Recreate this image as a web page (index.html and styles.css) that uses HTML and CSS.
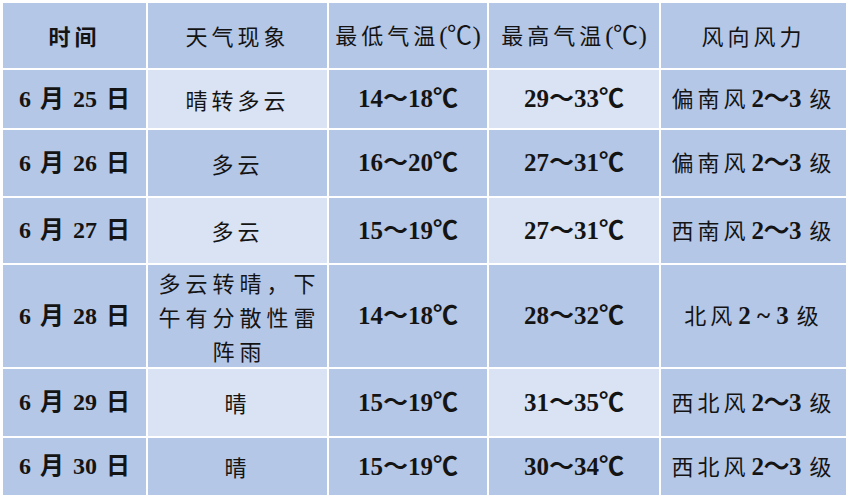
FILE: index.html
```html
<!DOCTYPE html>
<html lang="zh-CN">
<head>
<meta charset="utf-8">
<title>天气预报</title>
<link rel="stylesheet" href="styles.css">
</head>
<body>
<table class="wx">
  <colgroup>
    <col class="c0"><col class="c1"><col class="c2"><col class="c3"><col class="c4">
  </colgroup>
  <tr class="rh">
    <th class="hd">时间</th>
    <th class="kai">天气现象</th>
    <th class="kai">最低气温<span class="num-r">(℃)</span></th>
    <th class="kai">最高气温<span class="num-r">(℃)</span></th>
    <th class="kai">风向风力</th>
  </tr>
  <tr class="r1 band">
    <td class="date">6 月 25 日</td>
    <td class="kai">晴转多云</td>
    <td class="temp">14～18℃</td>
    <td class="temp">29～33℃</td>
    <td class="kai">偏南风<b class="n">2～3</b>级</td>
  </tr>
  <tr class="r2">
    <td class="date">6 月 26 日</td>
    <td class="kai">多云</td>
    <td class="temp">16～20℃</td>
    <td class="temp">27～31℃</td>
    <td class="kai">偏南风<b class="n">2～3</b>级</td>
  </tr>
  <tr class="r3 band">
    <td class="date">6 月 27 日</td>
    <td class="kai">多云</td>
    <td class="temp">15～19℃</td>
    <td class="temp">27～31℃</td>
    <td class="kai">西南风<b class="n">2～3</b>级</td>
  </tr>
  <tr class="r4">
    <td class="date">6 月 28 日</td>
    <td class="kai multi">多云转晴，下<br>午有分散性雷<br>阵雨</td>
    <td class="temp">14～18℃</td>
    <td class="temp">28～32℃</td>
    <td class="kai">北风<b class="n">2 ~ 3</b>级</td>
  </tr>
  <tr class="r5 band">
    <td class="date">6 月 29 日</td>
    <td class="kai">晴</td>
    <td class="temp">15～19℃</td>
    <td class="temp">31～35℃</td>
    <td class="kai">西北风<b class="n">2～3</b>级</td>
  </tr>
  <tr class="r6">
    <td class="date">6 月 30 日</td>
    <td class="kai">晴</td>
    <td class="temp">15～19℃</td>
    <td class="temp">30～34℃</td>
    <td class="kai">西北风<b class="n">2～3</b>级</td>
  </tr>
</table>
</body>
</html>
```
FILE: styles.css
```css
html, body {
  margin: 0;
  padding: 0;
  background: #ffffff;
}
body {
  width: 848px;
  height: 500px;
  overflow: hidden;
}
.wx {
  margin: 1px 0 0 1px;
  border-collapse: separate;
  border-spacing: 2px;
  table-layout: fixed;
  width: 846px;
  color: #141414;
  font-family: "Liberation Serif", "Noto Sans CJK SC", serif;
}
.c0 { width: 143px; }
.c1 { width: 179px; }
.c2 { width: 158px; }
.c3 { width: 170px; }
.c4 { width: 185px; }
.wx th, .wx td {
  background: #b4c7e7;
  padding: 0;
  text-align: center;
  vertical-align: middle;
  font-size: 22px;
  line-height: 1.2;
  white-space: nowrap;
}
.wx .band td:nth-child(2),
.wx .band td:nth-child(4) {
  background: #dae3f3;
}
.rh { height: 65px; }
.r1 { height: 58px; }
.r2 { height: 66px; }
.r3 { height: 65px; }
.r4 { height: 102px; }
.r5 { height: 67px; }
.r6 { height: 57px; }
.wx .hd {
  font-family: "Noto Sans CJK SC", sans-serif;
  font-weight: 700;
  font-size: 22px;
  letter-spacing: 4px;
}
.wx .kai {
  font-family: "Noto Sans CJK SC", sans-serif;
  font-weight: 400;
  font-size: 22px;
  letter-spacing: 4px;
}
.wx .num-r {
  font-family: "Liberation Serif", serif;
  letter-spacing: 0;
  font-size: 25px;
}
.wx .multi {
  line-height: 34px;
  white-space: normal;
  letter-spacing: 5px;
  padding-left: 4px;
}
.wx .date {
  font-family: "Liberation Serif", "Noto Sans CJK SC", serif;
  font-weight: 700;
  font-size: 24px;
  word-spacing: 3px;
}
.wx .temp {
  font-family: "Liberation Serif", "Noto Sans CJK SC", serif;
  font-weight: 700;
  font-size: 25px;
}
.wx .n {
  font-family: "Liberation Serif", serif;
  font-weight: 700;
  font-size: 25px;
  letter-spacing: 0;
  margin: 0 8px 0 2px;
}
```
